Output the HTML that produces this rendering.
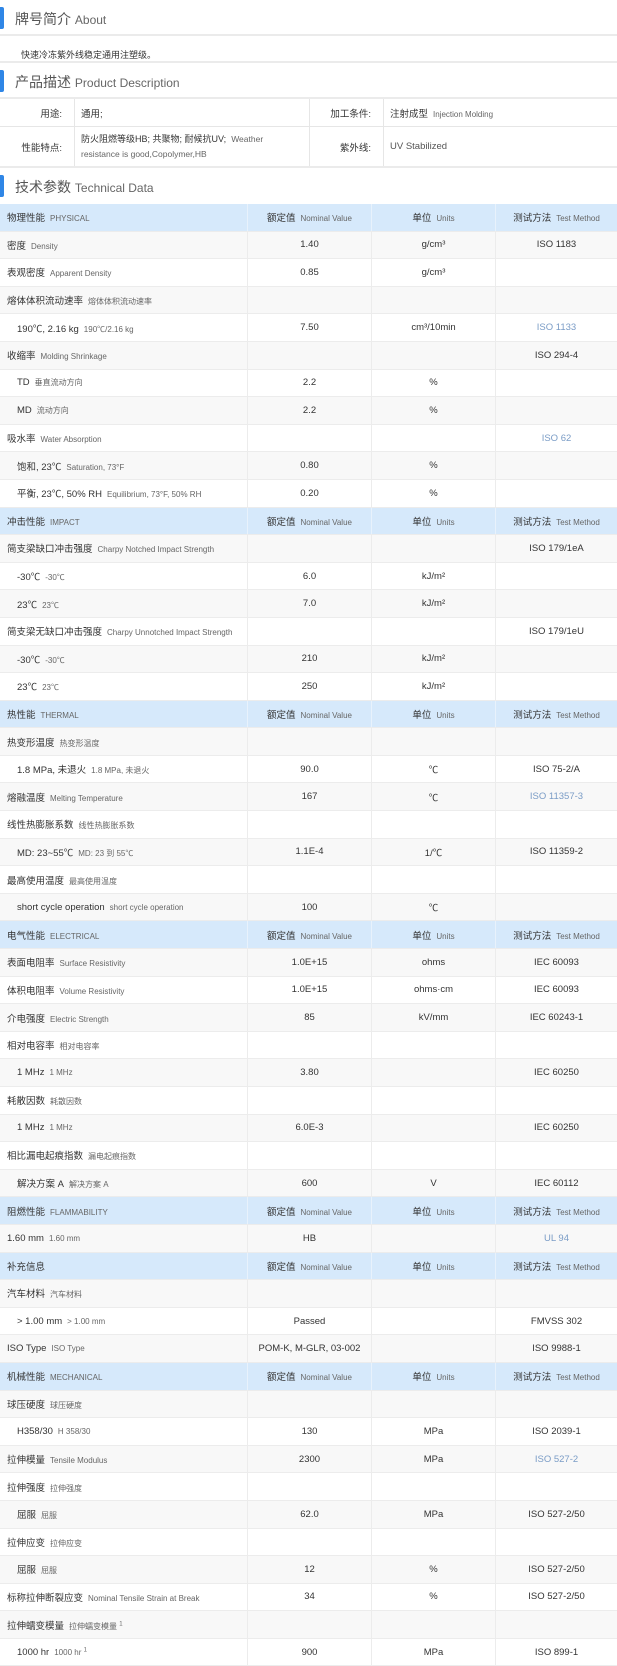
<!DOCTYPE html>
<html><head><meta charset="utf-8"><style>
*{margin:0;padding:0;box-sizing:border-box}
body{width:617px;height:1665px;overflow:hidden;background:#fff;font-family:"Liberation Sans","Noto Sans CJK SC",sans-serif;color:#333;font-size:9.5px}
.tt{position:relative;height:36px;border-bottom:2px solid #ebebeb}
.tt:before{content:"";position:absolute;left:0;top:7px;width:4px;height:22px;background:#2f86e6;border-radius:0 2px 2px 0}
.tt span{position:absolute;left:15px;top:9px;font-size:14px;color:#555}
.tt small{font-size:12px;color:#666}
.about{height:27px;padding:12px 0 0 21px;font-size:9px;border-bottom:2px solid #ebebeb}
.desc{display:flex;border-bottom:1px solid #e6e6e6;font-size:9.5px}
.desc>div{border-right:1px solid #e6e6e6;display:flex;align-items:center;padding:0 6px}
.desc .l{justify-content:flex-end;padding-right:12px}
.e{color:#666;font-size:8px;margin-left:5px}
.r{display:flex;height:27.6px;border-bottom:1px solid #ececec}
.r>div{display:flex;align-items:center;border-right:1px solid #ececec;white-space:nowrap;overflow:hidden}
.r>div>b{font-weight:normal}
.r>div:nth-child(1){width:248px;padding-left:7px}
.r>div:nth-child(2){width:124px;justify-content:center}
.r>div:nth-child(3){width:124px;justify-content:center}
.r>div:nth-child(4){width:121px;justify-content:center;border-right:0}
.g{background:#f8f8f8}
.h{background:#d6e9fb}
.h>div{border-right-color:#e8f2fc!important}
.in>div:first-child{padding-left:17px!important}
.lk{color:#7a9cc6}
sup{font-size:6px}
</style></head><body>
<div class="tt"><span>牌号简介 <small>About</small></span></div>
<div class="about">快速冷冻紫外线稳定通用注塑级。</div>
<div class="tt"><span>产品描述 <small>Product Description</small></span></div>
<div class="desc" style="height:28px"><div class="l" style="width:75px">用途:</div><div style="width:235px">通用;</div><div class="l" style="width:74px">加工条件:</div><div style="width:233px;border:0"><span>注射成型<span class="e">Injection Molding</span></span></div></div>
<div class="desc" style="height:41px;border-bottom:2px solid #ebebeb"><div class="l" style="width:75px">性能特点:</div><div style="width:235px;line-height:15px;font-size:9px"><span>防火阻燃等级HB; 共聚物; 耐候抗UV; &nbsp;<span style="color:#666;font-size:8.5px">Weather resistance is good,Copolymer,HB</span></span></div><div class="l" style="width:74px">紫外线:</div><div style="width:233px;border:0;color:#555">UV Stabilized</div></div>
<div class="tt" style="border:0"><span>技术参数 <small>Technical Data</small></span></div>

<div class="r h"><div><b>物理性能<span class="e">PHYSICAL</span></b></div><div><b>额定值<span class="e">Nominal Value</span></b></div><div><b>单位<span class="e">Units</span></b></div><div><b>测试方法<span class="e">Test Method</span></b></div></div>
<div class="r g"><div><b>密度<span class="e">Density</span></b></div><div>1.40</div><div>g/cm³</div><div>ISO 1183</div></div>
<div class="r"><div><b>表观密度<span class="e">Apparent Density</span></b></div><div>0.85</div><div>g/cm³</div><div></div></div>
<div class="r g"><div><b>熔体体积流动速率<span class="e">熔体体积流动速率</span></b></div><div></div><div></div><div></div></div>
<div class="r in"><div><b>190℃, 2.16 kg<span class="e">190℃/2.16 kg</span></b></div><div>7.50</div><div>cm³/10min</div><div class="lk">ISO 1133</div></div>
<div class="r g"><div><b>收缩率<span class="e">Molding Shrinkage</span></b></div><div></div><div></div><div>ISO 294-4</div></div>
<div class="r in"><div><b>TD<span class="e">垂直流动方向</span></b></div><div>2.2</div><div>%</div><div></div></div>
<div class="r g in"><div><b>MD<span class="e">流动方向</span></b></div><div>2.2</div><div>%</div><div></div></div>
<div class="r"><div><b>吸水率<span class="e">Water Absorption</span></b></div><div></div><div></div><div class="lk">ISO 62</div></div>
<div class="r g in"><div><b>饱和, 23℃<span class="e">Saturation, 73°F</span></b></div><div>0.80</div><div>%</div><div></div></div>
<div class="r in"><div><b>平衡, 23℃, 50% RH<span class="e">Equilibrium, 73°F, 50% RH</span></b></div><div>0.20</div><div>%</div><div></div></div>

<div class="r h"><div><b>冲击性能<span class="e">IMPACT</span></b></div><div><b>额定值<span class="e">Nominal Value</span></b></div><div><b>单位<span class="e">Units</span></b></div><div><b>测试方法<span class="e">Test Method</span></b></div></div>
<div class="r g"><div><b>简支梁缺口冲击强度<span class="e">Charpy Notched Impact Strength</span></b></div><div></div><div></div><div>ISO 179/1eA</div></div>
<div class="r in"><div><b>-30℃<span class="e">-30℃</span></b></div><div>6.0</div><div>kJ/m²</div><div></div></div>
<div class="r g in"><div><b>23℃<span class="e">23℃</span></b></div><div>7.0</div><div>kJ/m²</div><div></div></div>
<div class="r"><div><b>简支梁无缺口冲击强度<span class="e">Charpy Unnotched Impact Strength</span></b></div><div></div><div></div><div>ISO 179/1eU</div></div>
<div class="r g in"><div><b>-30℃<span class="e">-30℃</span></b></div><div>210</div><div>kJ/m²</div><div></div></div>
<div class="r in"><div><b>23℃<span class="e">23℃</span></b></div><div>250</div><div>kJ/m²</div><div></div></div>

<div class="r h"><div><b>热性能<span class="e">THERMAL</span></b></div><div><b>额定值<span class="e">Nominal Value</span></b></div><div><b>单位<span class="e">Units</span></b></div><div><b>测试方法<span class="e">Test Method</span></b></div></div>
<div class="r g"><div><b>热变形温度<span class="e">热变形温度</span></b></div><div></div><div></div><div></div></div>
<div class="r in"><div><b>1.8 MPa, 未退火<span class="e">1.8 MPa, 未退火</span></b></div><div>90.0</div><div>℃</div><div>ISO 75-2/A</div></div>
<div class="r g"><div><b>熔融温度<span class="e">Melting Temperature</span></b></div><div>167</div><div>℃</div><div class="lk">ISO 11357-3</div></div>
<div class="r"><div><b>线性热膨胀系数<span class="e">线性热膨胀系数</span></b></div><div></div><div></div><div></div></div>
<div class="r g in"><div><b>MD: 23~55℃<span class="e">MD: 23 到 55℃</span></b></div><div>1.1E-4</div><div>1/℃</div><div>ISO 11359-2</div></div>
<div class="r"><div><b>最高使用温度<span class="e">最高使用温度</span></b></div><div></div><div></div><div></div></div>
<div class="r g in"><div><b>short cycle operation<span class="e">short cycle operation</span></b></div><div>100</div><div>℃</div><div></div></div>

<div class="r h"><div><b>电气性能<span class="e">ELECTRICAL</span></b></div><div><b>额定值<span class="e">Nominal Value</span></b></div><div><b>单位<span class="e">Units</span></b></div><div><b>测试方法<span class="e">Test Method</span></b></div></div>
<div class="r g"><div><b>表面电阻率<span class="e">Surface Resistivity</span></b></div><div>1.0E+15</div><div>ohms</div><div>IEC 60093</div></div>
<div class="r"><div><b>体积电阻率<span class="e">Volume Resistivity</span></b></div><div>1.0E+15</div><div>ohms·cm</div><div>IEC 60093</div></div>
<div class="r g"><div><b>介电强度<span class="e">Electric Strength</span></b></div><div>85</div><div>kV/mm</div><div>IEC 60243-1</div></div>
<div class="r"><div><b>相对电容率<span class="e">相对电容率</span></b></div><div></div><div></div><div></div></div>
<div class="r g in"><div><b>1 MHz<span class="e">1 MHz</span></b></div><div>3.80</div><div></div><div>IEC 60250</div></div>
<div class="r"><div><b>耗散因数<span class="e">耗散因数</span></b></div><div></div><div></div><div></div></div>
<div class="r g in"><div><b>1 MHz<span class="e">1 MHz</span></b></div><div>6.0E-3</div><div></div><div>IEC 60250</div></div>
<div class="r"><div><b>相比漏电起痕指数<span class="e">漏电起痕指数</span></b></div><div></div><div></div><div></div></div>
<div class="r g in"><div><b>解决方案 A<span class="e">解决方案 A</span></b></div><div>600</div><div>V</div><div>IEC 60112</div></div>

<div class="r h"><div><b>阻燃性能<span class="e">FLAMMABILITY</span></b></div><div><b>额定值<span class="e">Nominal Value</span></b></div><div><b>单位<span class="e">Units</span></b></div><div><b>测试方法<span class="e">Test Method</span></b></div></div>
<div class="r g"><div><b>1.60 mm<span class="e">1.60 mm</span></b></div><div>HB</div><div></div><div class="lk">UL 94</div></div>

<div class="r h"><div>补充信息</div><div><b>额定值<span class="e">Nominal Value</span></b></div><div><b>单位<span class="e">Units</span></b></div><div><b>测试方法<span class="e">Test Method</span></b></div></div>
<div class="r g"><div><b>汽车材料<span class="e">汽车材料</span></b></div><div></div><div></div><div></div></div>
<div class="r in"><div><b>&gt; 1.00 mm<span class="e">&gt; 1.00 mm</span></b></div><div>Passed</div><div></div><div>FMVSS 302</div></div>
<div class="r g"><div><b>ISO Type<span class="e">ISO Type</span></b></div><div>POM-K, M-GLR, 03-002</div><div></div><div>ISO 9988-1</div></div>

<div class="r h"><div><b>机械性能<span class="e">MECHANICAL</span></b></div><div><b>额定值<span class="e">Nominal Value</span></b></div><div><b>单位<span class="e">Units</span></b></div><div><b>测试方法<span class="e">Test Method</span></b></div></div>
<div class="r g"><div><b>球压硬度<span class="e">球压硬度</span></b></div><div></div><div></div><div></div></div>
<div class="r in"><div><b>H358/30<span class="e">H 358/30</span></b></div><div>130</div><div>MPa</div><div>ISO 2039-1</div></div>
<div class="r g"><div><b>拉伸模量<span class="e">Tensile Modulus</span></b></div><div>2300</div><div>MPa</div><div class="lk">ISO 527-2</div></div>
<div class="r"><div><b>拉伸强度<span class="e">拉伸强度</span></b></div><div></div><div></div><div></div></div>
<div class="r g in"><div><b>屈服<span class="e">屈服</span></b></div><div>62.0</div><div>MPa</div><div>ISO 527-2/50</div></div>
<div class="r"><div><b>拉伸应变<span class="e">拉伸应变</span></b></div><div></div><div></div><div></div></div>
<div class="r g in"><div><b>屈服<span class="e">屈服</span></b></div><div>12</div><div>%</div><div>ISO 527-2/50</div></div>
<div class="r"><div><b>标称拉伸断裂应变<span class="e">Nominal Tensile Strain at Break</span></b></div><div>34</div><div>%</div><div>ISO 527-2/50</div></div>
<div class="r g"><div><b>拉伸蠕变模量<span class="e">拉伸蠕变模量 <sup>1</sup></span></b></div><div></div><div></div><div></div></div>
<div class="r in"><div><b>1000 hr<span class="e">1000 hr <sup>1</sup></span></b></div><div>900</div><div>MPa</div><div>ISO 899-1</div></div>
</body></html>
